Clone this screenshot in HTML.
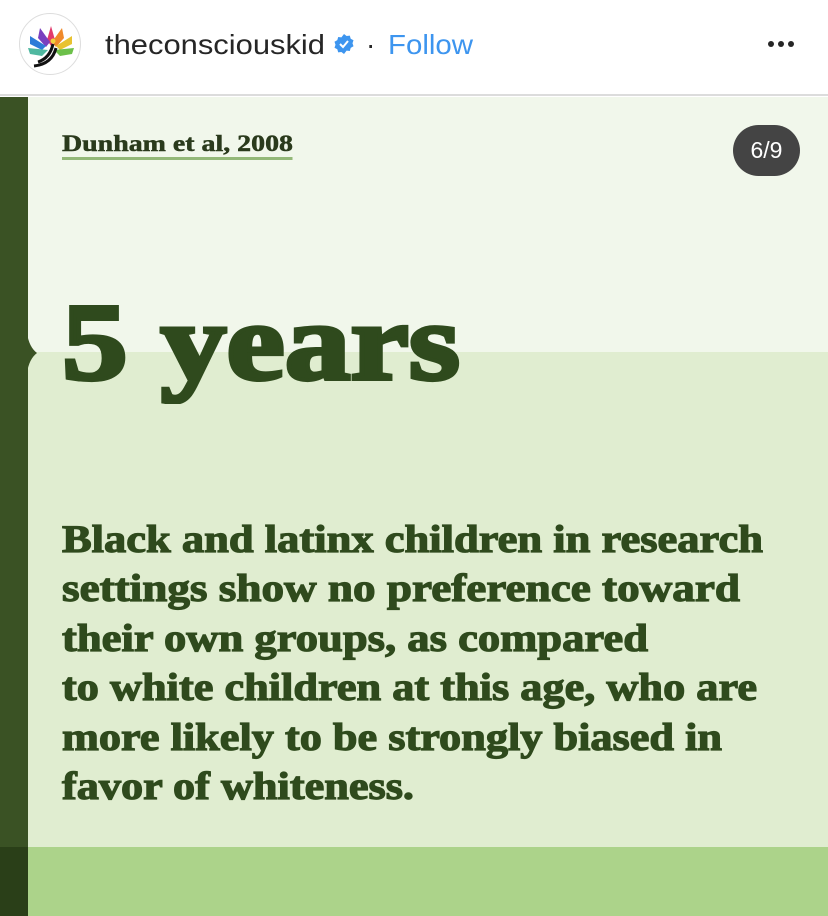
<!DOCTYPE html>
<html><head><meta charset="utf-8"><style>
*{margin:0;padding:0;box-sizing:border-box}
html,body{width:828px;height:916px;overflow:hidden}
body{background:#fff;font-family:"Liberation Sans",sans-serif;position:relative}
.hdr{position:absolute;left:0;top:0;width:828px;height:96px;background:#fff;border-bottom:2px solid #dcdcdc}
.av{position:absolute;left:19px;top:13px;width:62px;height:62px;border-radius:50%;border:1px solid #ddd;background:#fff;overflow:hidden}
.user{position:absolute;left:105px;top:29px;font-size:28px;color:#262626;white-space:nowrap;transform-origin:0 0}
.dot{position:absolute;left:366px;top:29px;font-size:28px;color:#262626}
.follow{position:absolute;left:388px;top:29px;font-size:28px;color:#3d95ef;white-space:nowrap;transform-origin:0 0}
.more{position:absolute;left:768px;top:41px;display:flex;gap:4px}
.more i{display:block;width:6px;height:6px;border-radius:50%;background:#262626}
.img{position:absolute;left:0;top:97px;width:828px;height:819px;background:#f1f7eb;overflow:hidden}
.mid{position:absolute;left:0;top:255px;width:828px;height:495px;background:#e0edd0}
.bot{position:absolute;left:0;top:750px;width:828px;height:80px;background:#acd38a}
.bar{position:absolute;left:0;top:0;width:28px;height:819px;background:#3a5224}
.barb{position:absolute;left:0;top:750px;width:28px;height:70px;background:#2a3f18}
.serif{font-family:"Liberation Serif",serif;font-weight:bold;color:#2f4a1d}
.dun{position:absolute;left:62px;top:34px;font-size:23px;color:#2a3a1c;border-bottom:3px solid #93b878;line-height:26px;white-space:nowrap;transform-origin:0 0;-webkit-text-stroke:0.5px #2a3a1c}
.badge{position:absolute;left:733px;top:28px;width:67px;height:51px;border-radius:26px;background:#444;color:#fff;font-size:23px;text-align:center;line-height:51px}
.big{position:absolute;left:62px;top:190px;font-size:110px;line-height:110px;transform-origin:0 0;white-space:nowrap;-webkit-text-stroke:4px #2f4a1d}
.ln{position:absolute;left:62px;font-size:39px;line-height:40px;white-space:nowrap;transform-origin:0 0;-webkit-text-stroke:1.2px #2f4a1d}
</style></head><body>
<div class="hdr">
 <div class="av"><svg width="62" height="62" viewBox="0 0 62 62">
  <path d="M31 12 L35 26 L31 32 L27 26Z" fill="#e23a6c"/>
  <path d="M20 14 L30 28 L26 33 L18 24Z" fill="#7a3fbf"/>
  <path d="M42 14 L32 28 L36 33 L44 24Z" fill="#f08a2a"/>
  <path d="M10 22 L26 32 L22 36 L10 30Z" fill="#2d7bd8"/>
  <path d="M52 22 L36 32 L40 36 L52 30Z" fill="#e8c230"/>
  <path d="M8 34 L28 36 L22 42 L10 40Z" fill="#4fb8a0"/>
  <path d="M54 34 L34 36 L40 42 L52 40Z" fill="#6cc04a"/>
  <path d="M18 48 Q30 44 33 30 M14 52 Q32 50 36 34" stroke="#111" stroke-width="3" fill="none"/>
  <circle cx="33" cy="27" r="2.5" fill="#f2d23c"/>
 </svg></div>
 <div class="user" data-w="220">theconsciouskid</div>
 <svg style="position:absolute;left:333px;top:33px" width="22" height="22" viewBox="0 0 22 22"><path d="M11 1l2.6 2 3.2-.4.9 3.1 2.8 1.6-1 3 1 3-2.8 1.6-.9 3.1-3.2-.4L11 21l-2.6-2-3.2.4-.9-3.1-2.8-1.6 1-3-1-3 2.8-1.6.9-3.1 3.2.4z" fill="#3d95ef"/><path d="M7 11l3 3 5-6" stroke="#fff" stroke-width="2" fill="none"/></svg>
 <div class="dot">·</div>
 <div class="follow" data-w="85">Follow</div>
 <div class="more"><i></i><i></i><i></i></div>
</div>
<div class="img">
 <div class="mid"></div>
 <div class="bot"></div>
 <div class="bar"></div>
 <div class="barb"></div>
 <svg style="position:absolute;left:27px;top:236px" width="12" height="40" viewBox="0 0 12 40"><path d="M0 0 Q2 14 10 20 Q2 26 0 40Z" fill="#3a5224"/></svg>
 <div class="dun serif" data-w="231">Dunham et al, 2008</div>
 <div class="badge">6/9</div>
 <div class="big serif" data-w="398">5 years</div>
 <div class="ln serif" style="top:423px" data-w="701">Black and latinx children in research</div>
 <div class="ln serif" style="top:472px" data-w="678">settings show no preference toward</div>
 <div class="ln serif" style="top:522px" data-w="586">their own groups, as compared</div>
 <div class="ln serif" style="top:571px" data-w="695">to white children at this age, who are</div>
 <div class="ln serif" style="top:621px" data-w="660">more likely to be strongly biased in</div>
 <div class="ln serif" style="top:670px" data-w="352">favor of whiteness.</div>
</div>
<script>
document.querySelectorAll('[data-w]').forEach(function(e){var w=e.getBoundingClientRect().width;var t=+e.getAttribute('data-w');e.style.transform='scaleX('+(t/w)+')';});
</script>
</body></html>
